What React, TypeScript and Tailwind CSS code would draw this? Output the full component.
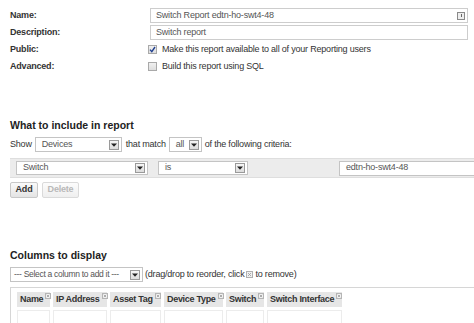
import React from "react";

const FONT = { fontFamily: '"Liberation Sans", Arial, sans-serif' };

function DropArrow() {
  return (
    <span className="flex h-[10px] w-[10px] shrink-0 items-center justify-center border border-[#9a9a9a] bg-gradient-to-b from-[#f6f6f6] to-[#dcdcdc]">
      <svg width="6" height="4" viewBox="0 0 6 4">
        <path d="M0 0.5h6L3 3.8z" fill="#222" />
      </svg>
    </span>
  );
}

function Select({ label, className = "" }: { label: string; className?: string }) {
  return (
    <div
      className={`flex items-center justify-between border border-[#c4c4c4] bg-white pr-[2px] text-[#555] ${className}`}
    >
      <span className="whitespace-nowrap">{label}</span>
      <DropArrow />
    </div>
  );
}

function CloseIcon() {
  return (
    <svg width="6" height="6" viewBox="0 0 6 6" className="ml-[2px] -mt-[7px] shrink-0">
      <rect x="0.5" y="0.5" width="5" height="5" fill="#f2f2f2" stroke="#b5b5b5" />
      <path d="M1.8 1.8l2.4 2.4M4.2 1.8l-2.4 2.4" stroke="#9a9a9a" strokeWidth="0.8" />
    </svg>
  );
}

function Checkbox({ checked }: { checked?: boolean }) {
  return (
    <span className="flex h-[9px] w-[9px] shrink-0 items-center justify-center border border-[#a9a9a9] bg-gradient-to-b from-[#f0f0f0] to-[#dedede]">
      {checked && (
        <svg width="7" height="7" viewBox="0 0 7 7">
          <path d="M1 3.6l1.8 2L6 1" stroke="#1f3f8f" strokeWidth="1.4" fill="none" />
        </svg>
      )}
    </span>
  );
}

const COLUMNS = [
  { label: "Name", w: "w-[33px]" },
  { label: "IP Address", w: "w-[54px]" },
  { label: "Asset Tag", w: "w-[51px]" },
  { label: "Device Type", w: "w-[59px]" },
  { label: "Switch", w: "w-[38px]" },
  { label: "Switch Interface", w: "w-[75px]" },
];

export default function App() {
  return (
    <div
      className="h-[323px] w-[474px] overflow-hidden bg-white pl-[10px] pt-[7px] text-[9px] tracking-[-0.2px] text-[#333]"
      style={FONT}
    >
      {/* Report details */}
      <div className="flex flex-col">
        <div className="flex h-[17px] items-center">
          <span className="w-[140px] font-bold">Name:</span>
          <div className="flex h-[15px] w-[318px] items-center justify-between border border-[#cdcdcd] bg-white pl-[5px] pr-[2px] text-[#555]">
            <span>Switch Report edtn-ho-swt4-48</span>
            <span className="flex h-[8px] w-[8px] items-center justify-center border border-[#8a8a8a] bg-[#eee]">
              <span className="h-[3px] w-[1px] bg-[#666]" />
            </span>
          </div>
        </div>
        <div className="flex h-[17px] items-center">
          <span className="w-[140px] font-bold">Description:</span>
          <div className="flex h-[15px] w-[318px] items-center border border-[#cdcdcd] bg-white pl-[5px] text-[#555]">
            Switch report
          </div>
        </div>
        <div className="flex h-[17px] items-center">
          <span className="w-[138px] font-bold">Public:</span>
          <Checkbox checked />
          <span className="ml-[5px]">Make this report available to all of your Reporting users</span>
        </div>
        <div className="flex h-[17px] items-center">
          <span className="w-[138px] font-bold">Advanced:</span>
          <Checkbox />
          <span className="ml-[5px]">Build this report using SQL</span>
        </div>
      </div>

      {/* Criteria */}
      <h2 className="mt-[44px] h-[13px] text-[10.5px] font-bold leading-[13px] tracking-normal text-[#222]">
        What to include in report
      </h2>
      <div className="mt-[5px] flex h-[15px] items-center">
        <span>Show</span>
        <Select label="Devices" className="ml-[3px] h-[15px] w-[87px] pl-[6px]" />
        <span className="ml-[4px]">that match</span>
        <Select label="all" className="ml-[3px] h-[15px] w-[33px] pl-[6px]" />
        <span className="ml-[3px]">of the following criteria:</span>
      </div>
      <div className="mt-[6px] flex h-[20px] w-[600px] items-center border-y border-[#dedede] bg-[#ececec] pl-[6px]">
        <Select label="Switch" className="h-[14px] w-[132px] pl-[6px]" />
        <Select label="is" className="ml-[10px] h-[14px] w-[90px] pl-[6px]" />
        <div className="ml-[91px] flex h-[15px] w-[200px] items-center border border-[#c4c4c4] bg-white pl-[6px] text-[#555]">
          edtn-ho-swt4-48
        </div>
      </div>
      <div className="mt-[4px] flex h-[16px] gap-[4px]">
        <button className="h-[16px] w-[28px] rounded-[2px] border border-[#c8c8c8] bg-gradient-to-b from-[#fafafa] to-[#e4e4e4] font-bold text-[#333]">
          Add
        </button>
        <button className="h-[16px] w-[37px] rounded-[2px] border border-[#dadada] bg-gradient-to-b from-[#fcfcfc] to-[#efefef] font-bold text-[#b8b8b8]">
          Delete
        </button>
      </div>

      {/* Columns */}
      <h2 className="mt-[51px] h-[13px] text-[10.5px] font-bold leading-[13px] tracking-normal text-[#222]">
        Columns to display
      </h2>
      <div className="mt-[5px] flex h-[15px] items-center">
        <Select
          label="--- Select a column to add it ---"
          className="h-[15px] w-[133px] pl-[3px] text-[8.5px] tracking-[-0.3px]"
        />
        <span className="ml-[2px] flex items-center">
          (drag/drop to reorder, click
          <svg width="7" height="7" viewBox="0 0 7 7" className="mx-[2px]">
            <rect x="0.5" y="0.5" width="6" height="6" fill="#f0f0f0" stroke="#b0b0b0" />
            <path d="M2 2l3 3M5 2l-3 3" stroke="#999" strokeWidth="0.8" />
          </svg>
          to remove)
        </span>
      </div>
      <div className="mt-[5px] w-[600px] border-l border-t border-[#d6d6d6] pl-[6px] pt-[4px]">
        <div className="flex gap-[3px]">
          {COLUMNS.map((c) => (
            <div key={c.label} className={`flex flex-col gap-[3px] ${c.w}`}>
              <div className="flex h-[15px] items-center bg-[#e6e6e6] pl-[3px] font-bold tracking-[-0.3px] text-[#333]">
                <span className="whitespace-nowrap">{c.label}</span>
                <CloseIcon />
              </div>
              <div className="h-[30px] border border-[#ececec] bg-white" />
            </div>
          ))}
        </div>
      </div>
    </div>
  );
}
